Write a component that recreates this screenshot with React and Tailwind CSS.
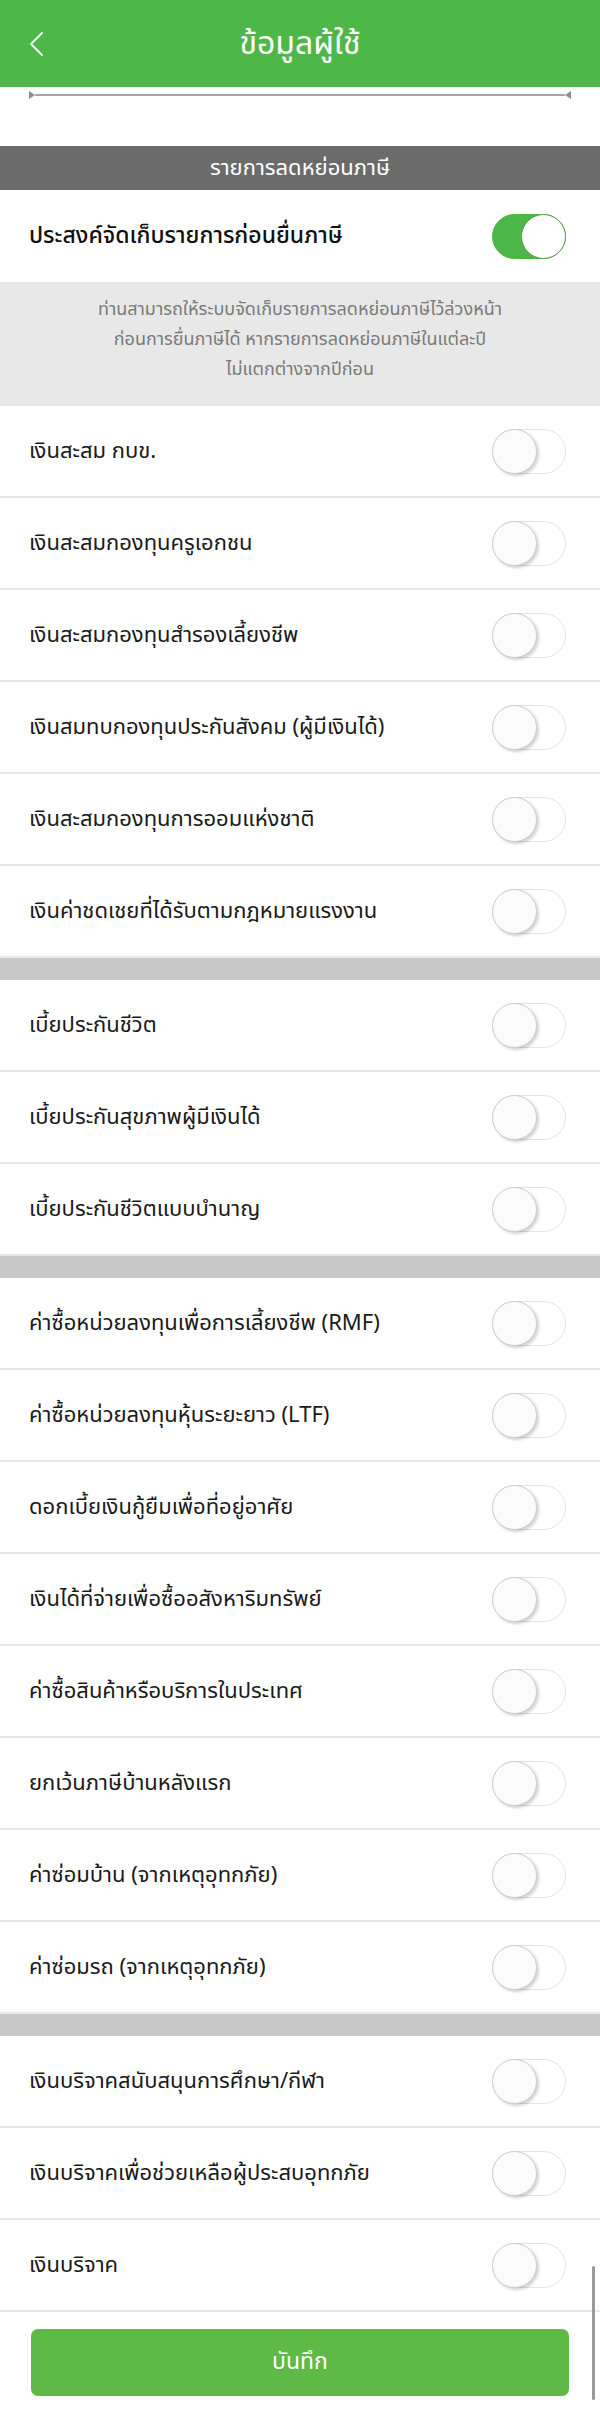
import React, { useState } from 'react';

const groups = [
  [
    'เงินสะสม กบข.',
    'เงินสะสมกองทุนครูเอกชน',
    'เงินสะสมกองทุนสำรองเลี้ยงชีพ',
    'เงินสมทบกองทุนประกันสังคม (ผู้มีเงินได้)',
    'เงินสะสมกองทุนการออมแห่งชาติ',
    'เงินค่าชดเชยที่ได้รับตามกฎหมายแรงงาน',
  ],
  ['เบี้ยประกันชีวิต', 'เบี้ยประกันสุขภาพผู้มีเงินได้', 'เบี้ยประกันชีวิตแบบบำนาญ'],
  [
    'ค่าซื้อหน่วยลงทุนเพื่อการเลี้ยงชีพ (RMF)',
    'ค่าซื้อหน่วยลงทุนหุ้นระยะยาว (LTF)',
    'ดอกเบี้ยเงินกู้ยืมเพื่อที่อยู่อาศัย',
    'เงินได้ที่จ่ายเพื่อซื้ออสังหาริมทรัพย์',
    'ค่าซื้อสินค้าหรือบริการในประเทศ',
    'ยกเว้นภาษีบ้านหลังแรก',
    'ค่าซ่อมบ้าน (จากเหตุอุทกภัย)',
    'ค่าซ่อมรถ (จากเหตุอุทกภัย)',
  ],
  [
    'เงินบริจาคสนับสนุนการศึกษา/กีฬา',
    'เงินบริจาคเพื่อช่วยเหลือผู้ประสบอุทกภัย',
    'เงินบริจาค',
  ],
];

const Toggle = ({ on, onClick }) => (
  <button
    type="button"
    onClick={onClick}
    className={`relative h-[45px] w-[74px] shrink-0 rounded-full border ${
      on ? 'border-[#4cb748] bg-[#4cb748]' : 'border-[#e4e4e4] bg-white'
    }`}
  >
    <span
      className={`absolute top-[-1px] h-[45px] w-[45px] rounded-full ${
        on
          ? 'right-[-1px] border border-[#5b9c4f] bg-white'
          : 'left-[-1px] border border-[#cfcfcf] bg-[#fbfbfb] shadow-[2px_2px_3px_rgba(0,0,0,0.18)]'
      }`}
    />
  </button>
);

const Row = ({ label, on, onToggle }) => (
  <div className="flex h-[92px] items-center justify-between border-b-2 border-[#e8e8e8] pl-[29px] pr-[34px]">
    <span className="text-[22px] text-[#1a1a1a]">{label}</span>
    <Toggle on={on} onClick={onToggle} />
  </div>
);

export default function App() {
  const [store, setStore] = useState(true);
  const [checked, setChecked] = useState({});

  const flip = (key) => setChecked((s) => ({ ...s, [key]: !s[key] }));

  return (
    <div
      className="relative min-h-[2410px] w-full bg-white"
      style={{ fontFamily: '"Noto Sans Thai", "Noto Sans Thai UI", "Noto Sans", "DejaVu Sans", sans-serif' }}
    >
      {/* header */}
      <div className="relative flex h-[87px] items-center justify-center bg-[#4db848]">
        <button type="button" className="absolute left-[28px] top-[31px]">
          <svg width="16" height="26" viewBox="0 0 16 26" fill="none">
            <path d="M14 2 L3 13 L14 24" stroke="white" strokeWidth="1.8" strokeLinecap="round" strokeLinejoin="round" />
          </svg>
        </button>
        <h1 className="text-[32px] leading-none text-white">ข้อมูลผู้ใช้</h1>
      </div>

      {/* range line */}
      <div className="flex items-center px-[29px] pt-[4px]">
        <span className="h-0 w-0 border-y-[4px] border-l-[6px] border-y-transparent border-l-[#8c8c8c]" />
        <div className="h-[2px] flex-1 bg-[#a5a5a5]" />
        <span className="h-0 w-0 border-y-[4px] border-r-[6px] border-y-transparent border-r-[#8c8c8c]" />
      </div>

      <div className="h-[47px]" />

      {/* section title */}
      <div className="flex h-[44px] items-center justify-center bg-[#6b6b6b]">
        <span className="text-[22px] text-white">รายการลดหย่อนภาษี</span>
      </div>

      <div className="flex h-[92px] items-center justify-between pl-[29px] pr-[34px]">
        <span className="text-[23px] font-medium text-[#111]">ประสงค์จัดเก็บรายการก่อนยื่นภาษี</span>
        <Toggle on={store} onClick={() => setStore(!store)} />
      </div>

      <div className="h-[124px] bg-[#e8e8e8] pt-[13px] text-center text-[18px] leading-[30px] text-[#7a7a7a]">
        ท่านสามารถให้ระบบจัดเก็บรายการลดหย่อนภาษีไว้ล่วงหน้า
        <br />
        ก่อนการยื่นภาษีได้ หากรายการลดหย่อนภาษีในแต่ละปี
        <br />
        ไม่แตกต่างจากปีก่อน
      </div>

      {groups.map((items, gi) => (
        <div key={gi}>
          {gi > 0 && <div className="h-[22px] bg-[#c8c8c8]" />}
          {items.map((label) => (
            <Row key={label} label={label} on={!!checked[label]} onToggle={() => flip(label)} />
          ))}
        </div>
      ))}

      <div className="px-[31px] pt-[17px]">
        <button
          type="button"
          className="flex h-[67px] w-full items-center justify-center rounded-[7px] bg-[#5fb946] text-[23px] text-white"
        >
          บันทึก
        </button>
      </div>

      {/* scroll indicator */}
      <div className="absolute right-[5px] top-[2266px] h-[134px] w-[3px] rounded-full bg-[#9a9a9a]" />
    </div>
  );
}
